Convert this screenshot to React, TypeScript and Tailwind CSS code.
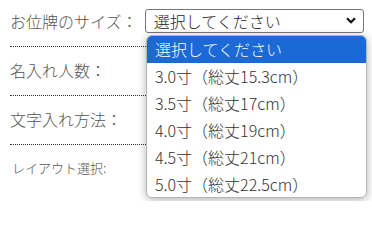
import React from "react";

const font = { fontFamily: '"Noto Sans CJK JP", "Noto Sans", sans-serif' };

const options = [
  "選択してください",
  "3.0寸（総丈15.3cm）",
  "3.5寸（総丈17cm）",
  "4.0寸（総丈19cm）",
  "4.5寸（総丈21cm）",
  "5.0寸（総丈22.5cm）",
];

export default function App() {
  return (
    <div className="relative w-[372px] h-[201px] bg-white overflow-hidden font-light" style={font}>
      <div className="flex flex-col pl-[10px] pr-[8px]">
        <div className="flex items-center h-[47px] pb-[5px] border-b border-dotted border-[#333]">
          <div className="w-[136px] text-[16px] leading-[20px] text-[#555]">お位牌のサイズ：</div>
          <div className="flex items-center justify-between w-[221px] h-[24px] border border-[#767676] rounded-[3px] pl-[8px] pr-[6px] text-[16px] leading-[20px] text-[#222]">
            <span>選択してください</span>
            <svg width="10" height="7" viewBox="0 0 10 7" className="mr-[1px]">
              <path d="M1 1.2 L5 5.2 L9 1.2" fill="none" stroke="#111" strokeWidth="2.2" />
            </svg>
          </div>
        </div>
        <div className="flex items-center h-[49px] pb-[2px] border-b border-dotted border-[#333]">
          <div className="text-[16px] leading-[20px] text-[#555]">名入れ人数：</div>
        </div>
        <div className="flex items-center h-[49px] pb-[2px] border-b border-dotted border-[#333]">
          <div className="text-[16px] leading-[20px] text-[#555]">文字入れ方法：</div>
        </div>
        <div className="flex items-center h-[48px] pb-[2px] pl-[2px]">
          <div className="text-[13px] leading-[18px] text-[#555]">レイアウト選択:</div>
        </div>
      </div>
      <div className="absolute left-[146px] top-[35px] w-[221px] h-[163px] bg-white border border-[#b5b5b5] rounded-[6px] shadow-[0_2px_10px_rgba(0,0,0,0.3)] overflow-hidden flex flex-col">
        {options.map((o, i) => (
          <div
            key={o}
            className={
              i === 0
                ? "h-[27px] flex items-center pl-[8px] text-[16px] leading-[20px] bg-[#1a69d4] text-white"
                : "h-[27px] flex items-center pl-[8px] text-[16px] leading-[20px] text-[#333]"
            }
          >
            {o}
          </div>
        ))}
      </div>
    </div>
  );
}
